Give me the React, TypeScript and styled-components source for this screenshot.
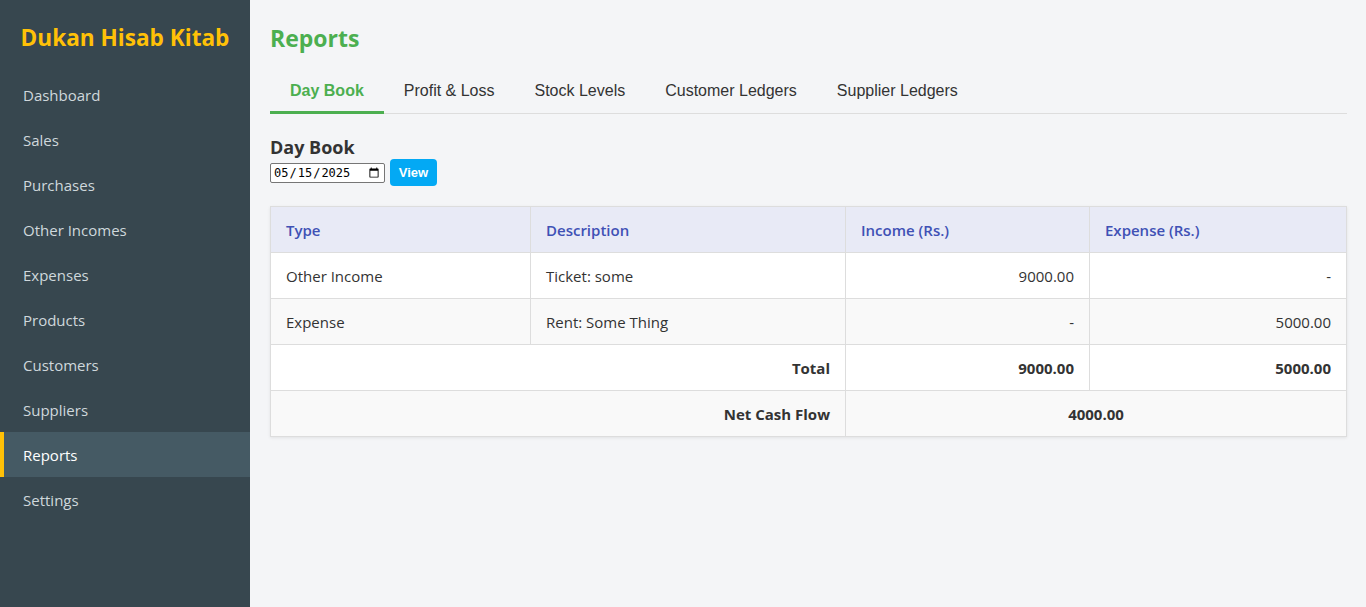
import React from "react";
import styled, { createGlobalStyle } from "styled-components";

const Global = createGlobalStyle`
  * { box-sizing: border-box; }
  html, body { margin: 0; padding: 0; height: 100%; }
  body { font-family: "Open Sans", "Noto Sans", sans-serif; background: #f4f5f7; color: #333; }
  #root { height: 100%; }
`;

const Layout = styled.div`
  display: flex;
  min-height: 607px;
  height: 100vh;
`;

const Sidebar = styled.aside`
  width: 250px;
  flex-shrink: 0;
  background: #37474f;
  color: #cfd8dc;
  display: flex;
  flex-direction: column;
`;

const Brand = styled.div`
  color: #ffc107;
  font-weight: 700;
  font-size: 22.6px;
  text-align: center;
  padding: 22px 0 18px;
  line-height: 32px;
`;

const NavItem = styled.div<{ $active?: boolean }>`
  height: 45px;
  display: flex;
  align-items: center;
  padding-left: ${(p) => (p.$active ? "19px" : "23px")};
  font-size: 15px;
  color: ${(p) => (p.$active ? "#ffffff" : "#cfd8dc")};
  background: ${(p) => (p.$active ? "#455a64" : "transparent")};
  border-left: ${(p) => (p.$active ? "4px solid #ffc107" : "none")};
`;

const Main = styled.main`
  flex: 1;
  padding: 20px 20px;
  background: #f4f5f7;
`;

const PageTitle = styled.h1`
  margin: 0;
  color: #4caf50;
  font-size: 23px;
  font-weight: 700;
  line-height: 36px;
`;

const Tabs = styled.div`
  display: flex;
  margin-top: 15px;
  border-bottom: 1px solid #dddddd;
`;

const Tab = styled.div<{ $active?: boolean }>`
  padding: 11px 20px 11px;
  font-family: "Liberation Sans", Arial, sans-serif;
  font-size: 16px;
  line-height: 18px;
  color: ${(p) => (p.$active ? "#4caf50" : "#333")};
  font-weight: ${(p) => (p.$active ? 700 : 400)};
  border-bottom: 3px solid ${(p) => (p.$active ? "#4caf50" : "transparent")};
  margin-bottom: -1px;
`;

const SectionTitle = styled.h3`
  margin: 21px 0 0;
  font-size: 18px;
  font-weight: 700;
  color: #333;
  line-height: 24px;
`;

const Controls = styled.div`
  display: flex;
  align-items: center;
  gap: 5px;
`;

const DateInput = styled.input`
  width: 115px;
  height: 20px;
  font-family: "DejaVu Sans Mono", monospace;
  font-size: 12px;
  padding: 0 2px;
  border: 1px solid #767676;
  border-radius: 2px;
  background: #fff;
`;

const ViewButton = styled.button`
  background: #03a9f4;
  color: #fff;
  border: none;
  border-radius: 4px;
  height: 27px;
  width: 47px;
  font-family: "Liberation Sans", Arial, sans-serif;
  font-weight: 700;
  font-size: 13px;
  padding: 0;
`;

const Table = styled.table`
  margin-top: 20px;
  width: 100%;
  border-collapse: collapse;
  background: #fff;
  box-shadow: 0 1px 3px rgba(0, 0, 0, 0.08);
  font-size: 15px;
  table-layout: fixed;
`;

const Th = styled.th<{ $w: number }>`
  width: ${(p) => p.$w}px;
  background: #e8eaf6;
  color: #3f51b5;
  font-weight: 600;
  text-align: left;
  padding: 0 15px;
  height: 46px;
  border: 1px solid #dddddd;
`;

const Row = styled.tr<{ $alt?: boolean }>`
  background: ${(p) => (p.$alt ? "#f9f9f9" : "#fff")};
`;

const Td = styled.td<{ $align?: string; $bold?: boolean }>`
  padding: 0 15px;
  height: 46px;
  border: 1px solid #dddddd;
  text-align: ${(p) => p.$align || "left"};
  font-weight: ${(p) => (p.$bold ? 700 : 400)};
  color: #333;
`;

const nav = [
  "Dashboard",
  "Sales",
  "Purchases",
  "Other Incomes",
  "Expenses",
  "Products",
  "Customers",
  "Suppliers",
  "Reports",
  "Settings",
];

const tabs = ["Day Book", "Profit & Loss", "Stock Levels", "Customer Ledgers", "Supplier Ledgers"];

export default function App() {
  return (
    <>
      <Global />
      <Layout>
        <Sidebar>
          <Brand>Dukan Hisab Kitab</Brand>
          {nav.map((n) => (
            <NavItem key={n} $active={n === "Reports"}>
              {n}
            </NavItem>
          ))}
        </Sidebar>
        <Main>
          <PageTitle>Reports</PageTitle>
          <Tabs>
            {tabs.map((t) => (
              <Tab key={t} $active={t === "Day Book"}>
                {t}
              </Tab>
            ))}
          </Tabs>
          <SectionTitle>Day Book</SectionTitle>
          <Controls>
            <DateInput type="date" defaultValue="2025-05-15" />
            <ViewButton>View</ViewButton>
          </Controls>
          <Table>
            <thead>
              <tr>
                <Th $w={260}>Type</Th>
                <Th $w={315}>Description</Th>
                <Th $w={244}>Income (Rs.)</Th>
                <Th $w={257}>Expense (Rs.)</Th>
              </tr>
            </thead>
            <tbody>
              <Row>
                <Td>Other Income</Td>
                <Td>Ticket: some</Td>
                <Td $align="right">9000.00</Td>
                <Td $align="right">-</Td>
              </Row>
              <Row $alt>
                <Td>Expense</Td>
                <Td>Rent: Some Thing</Td>
                <Td $align="right">-</Td>
                <Td $align="right">5000.00</Td>
              </Row>
              <Row>
                <Td colSpan={2} $align="right" $bold>
                  Total
                </Td>
                <Td $align="right" $bold>
                  9000.00
                </Td>
                <Td $align="right" $bold>
                  5000.00
                </Td>
              </Row>
              <Row $alt>
                <Td colSpan={2} $align="right" $bold>
                  Net Cash Flow
                </Td>
                <Td colSpan={2} $align="center" $bold>
                  4000.00
                </Td>
              </Row>
            </tbody>
          </Table>
        </Main>
      </Layout>
    </>
  );
}
